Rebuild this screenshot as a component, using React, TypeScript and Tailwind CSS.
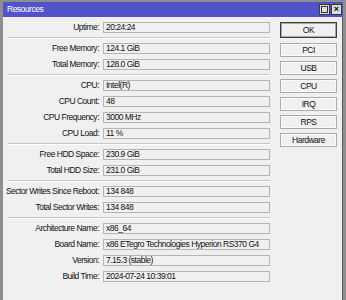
const groups: [string, string][][] = [
  [["Uptime", "20:24:24"]],
  [
    ["Free Memory", "124.1 GiB"],
    ["Total Memory", "128.0 GiB"],
  ],
  [
    ["CPU", "Intel(R)"],
    ["CPU Count", "48"],
    ["CPU Frequency", "3000 MHz"],
    ["CPU Load", "11 %"],
  ],
  [
    ["Free HDD Space", "230.9 GiB"],
    ["Total HDD Size", "231.0 GiB"],
  ],
  [
    ["Sector Writes Since Reboot", "134 848"],
    ["Total Sector Writes", "134 848"],
  ],
  [
    ["Architecture Name", "x86_64"],
    ["Board Name", "x86 ETegro Technologies Hyperion RS370 G4"],
    ["Version", "7.15.3 (stable)"],
    ["Build Time", "2024-07-24 10:39:01"],
  ],
]

const buttons = ["PCI", "USB", "CPU", "IRQ", "RPS", "Hardware"]

export default function App() {
  return (
    <div className="w-[346px] h-[300px] overflow-hidden bg-[#8e8e8e] pt-[2px] px-[3px] flex flex-col font-['Liberation_Sans',Arial,sans-serif] text-[8.5px] tracking-[-0.5px] text-[#111] leading-none">
      {/* Title bar */}
      <div className="h-[15px] shrink-0 bg-[#5353c9] flex items-center justify-between pl-[4px] pr-[1px]">
        <span className="text-white text-[8.5px]">Resources</span>
        <div className="flex gap-[1px]">
          <div className="w-[11px] h-[11px] bg-[#dcdcdc] border border-[#3a3a3a] flex items-center justify-center">
            <div className="w-[7px] h-[7px] border border-[#333]"></div>
          </div>
          <div className="w-[11px] h-[11px] bg-[#dcdcdc] border border-[#3a3a3a] flex items-center justify-center text-[9px] font-bold tracking-normal">
            ×
          </div>
        </div>
      </div>

      {/* Body */}
      <div className="flex-1 bg-[#f0f0f0] flex border-r border-[#5c5c5c]">
        <div className="w-[267px] pt-[5px] flex flex-col">
          {groups.map((rows, gi) => (
            <div key={gi} className="flex flex-col">
              {gi > 0 && <div className="ml-[5px] my-[4px] h-[2px] border-t border-[#c8c8c8] border-b border-b-white"></div>}
              <div className="flex flex-col gap-[5px]">
                {rows.map(([label, value]) => (
                  <div key={label} className="flex items-center h-[11px]">
                    <div className="w-[97px] text-right pr-[1px] whitespace-nowrap">{label}:</div>
                    <div className="ml-[3px] flex-1 h-[11px] border border-[#b4b4b4] bg-[#f0f0f0] flex items-center pl-[2px] whitespace-nowrap overflow-hidden">
                      {value}
                    </div>
                  </div>
                ))}
              </div>
            </div>
          ))}
        </div>

        <div className="ml-auto mr-[5px] w-[57px] pt-[5px] flex flex-col">
          <button className="h-[16px] border border-[#3c3c3c] bg-[#f0f0f0] shadow-[inset_0_0_0_1px_#a8a8a8]">OK</button>
          <div className="mt-[5px] flex flex-col gap-[4px]">
            {buttons.map((b) => (
              <button key={b} className="h-[14px] border border-[#ababab] bg-[#f0f0f0] shadow-[inset_0_0_0_1px_#fbfbfb]">
                {b}
              </button>
            ))}
          </div>
        </div>
      </div>
    </div>
  )
}
